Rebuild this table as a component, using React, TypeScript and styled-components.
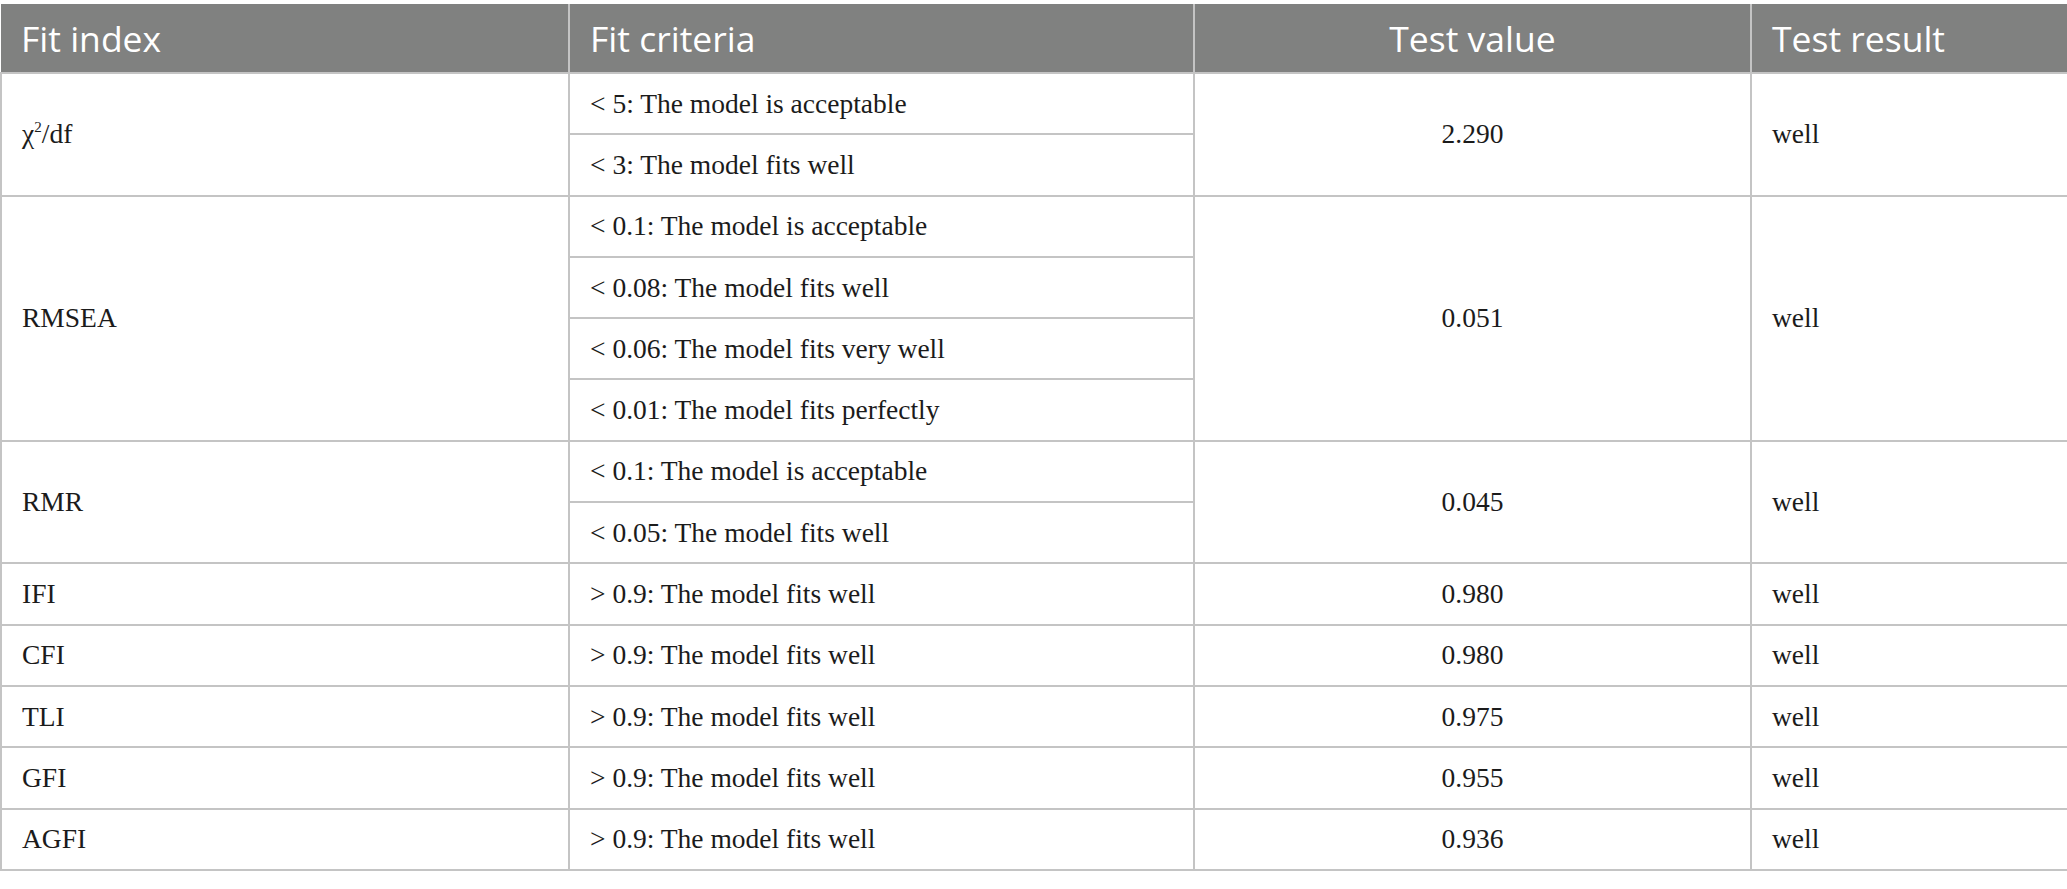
import React from "react";
import styled, { createGlobalStyle } from "styled-components";

const Global = createGlobalStyle`
  html, body { margin: 0; padding: 0; background: #ffffff; }
  body { padding-top: 4px; }
`;

const Table = styled.table`
  width: 2067px;
  border-collapse: collapse;
  table-layout: fixed;
  font-family: "Liberation Serif", "Times New Roman", serif;
  color: #1b1b1b;
`;

const HeadCell = styled.th<{ $align?: "left" | "center" }>`
  background: #808180;
  color: #ffffff;
  font-family: "Open Sans", "Noto Sans", sans-serif;
  font-weight: 400;
  font-size: 35.5px;
  height: 69px;
  padding: 0 20px;
  text-align: ${(p) => p.$align ?? "left"};
  border-left: 2px solid #c4c4c4;
  border-bottom: 2px solid #c4c4c4;
  box-sizing: border-box;
  &:first-child { border-left: none; }
`;

const Cell = styled.td<{ $align?: "left" | "center" }>`
  font-size: 27.5px;
  height: 61.3px;
  padding: 0 20px;
  text-align: ${(p) => p.$align ?? "left"};
  vertical-align: middle;
  border: 2px solid #c4c4c4;
  box-sizing: border-box;
  white-space: nowrap;
`;

const Sup = styled.sup`
  font-size: 0.55em;
  vertical-align: 0.7em;
  line-height: 0;
`;

type Group = { index: React.ReactNode; criteria: string[]; value: string; result: string };

const groups: Group[] = [
  {
    index: (
      <>
        χ<Sup>2</Sup>/df
      </>
    ),
    criteria: ["< 5: The model is acceptable", "< 3: The model fits well"],
    value: "2.290",
    result: "well",
  },
  {
    index: "RMSEA",
    criteria: [
      "< 0.1: The model is acceptable",
      "< 0.08: The model fits well",
      "< 0.06: The model fits very well",
      "< 0.01: The model fits perfectly",
    ],
    value: "0.051",
    result: "well",
  },
  {
    index: "RMR",
    criteria: ["< 0.1: The model is acceptable", "< 0.05: The model fits well"],
    value: "0.045",
    result: "well",
  },
  { index: "IFI", criteria: ["> 0.9: The model fits well"], value: "0.980", result: "well" },
  { index: "CFI", criteria: ["> 0.9: The model fits well"], value: "0.980", result: "well" },
  { index: "TLI", criteria: ["> 0.9: The model fits well"], value: "0.975", result: "well" },
  { index: "GFI", criteria: ["> 0.9: The model fits well"], value: "0.955", result: "well" },
  { index: "AGFI", criteria: ["> 0.9: The model fits well"], value: "0.936", result: "well" },
];

export default function App() {
  return (
    <>
      <Global />
      <Table>
        <colgroup>
          <col style={{ width: 568 }} />
          <col style={{ width: 625 }} />
          <col style={{ width: 557 }} />
          <col style={{ width: 317 }} />
        </colgroup>
        <thead>
          <tr>
            <HeadCell>Fit index</HeadCell>
            <HeadCell>Fit criteria</HeadCell>
            <HeadCell $align="center">Test value</HeadCell>
            <HeadCell>Test result</HeadCell>
          </tr>
        </thead>
        <tbody>
          {groups.map((g, gi) =>
            g.criteria.map((c, ci) => (
              <tr key={`${gi}-${ci}`}>
                {ci === 0 && <Cell rowSpan={g.criteria.length}>{g.index}</Cell>}
                <Cell>{c}</Cell>
                {ci === 0 && (
                  <Cell rowSpan={g.criteria.length} $align="center">
                    {g.value}
                  </Cell>
                )}
                {ci === 0 && <Cell rowSpan={g.criteria.length}>{g.result}</Cell>}
              </tr>
            ))
          )}
        </tbody>
      </Table>
    </>
  );
}
